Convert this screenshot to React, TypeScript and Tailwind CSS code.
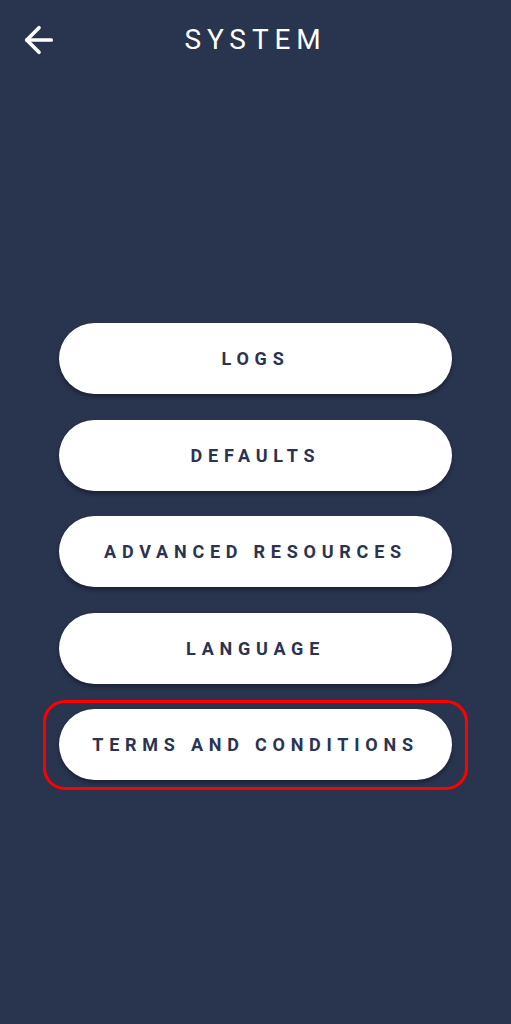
import { ArrowLeft } from "lucide-react"

const ITEMS = [
  { id: "logs", label: "LOGS" },
  { id: "defaults", label: "DEFAULTS" },
  { id: "advanced", label: "ADVANCED RESOURCES" },
  { id: "language", label: "LANGUAGE" },
  { id: "terms", label: "TERMS AND CONDITIONS", highlighted: true },
]

export default function App() {
  return (
    <div
      className="flex min-h-[1024px] w-full flex-col bg-[#29344f]"
      style={{ fontFamily: "Roboto, 'Liberation Sans', sans-serif" }}
    >
      {/* Header */}
      <div className="relative flex h-[80px] items-center justify-center">
        <button className="absolute left-[18px] top-[19px] text-white">
          <ArrowLeft className="h-[42px] w-[42px]" strokeWidth={2.1} />
        </button>
        <h1 className="text-[28px] font-normal tracking-[0.21em] text-white">
          SYSTEM
        </h1>
      </div>

      {/* Menu */}
      <div className="flex flex-col gap-[25.5px] px-[59px] pt-[243px]">
        {ITEMS.map((item) => (
          <div key={item.id} className="relative">
            {item.highlighted && (
              <div className="pointer-events-none absolute -bottom-[10px] -left-[16px] -right-[16px] -top-[9px] rounded-[22px] border-[3px] border-[#ff0000]" />
            )}
            <button className="flex h-[71px] w-full items-center justify-center rounded-full bg-white text-[18px] font-bold tracking-[0.32em] text-[#2a3452] shadow-[0_3px_4px_rgba(0,0,0,0.35)]">
              {item.label}
            </button>
          </div>
        ))}
      </div>
    </div>
  )
}
